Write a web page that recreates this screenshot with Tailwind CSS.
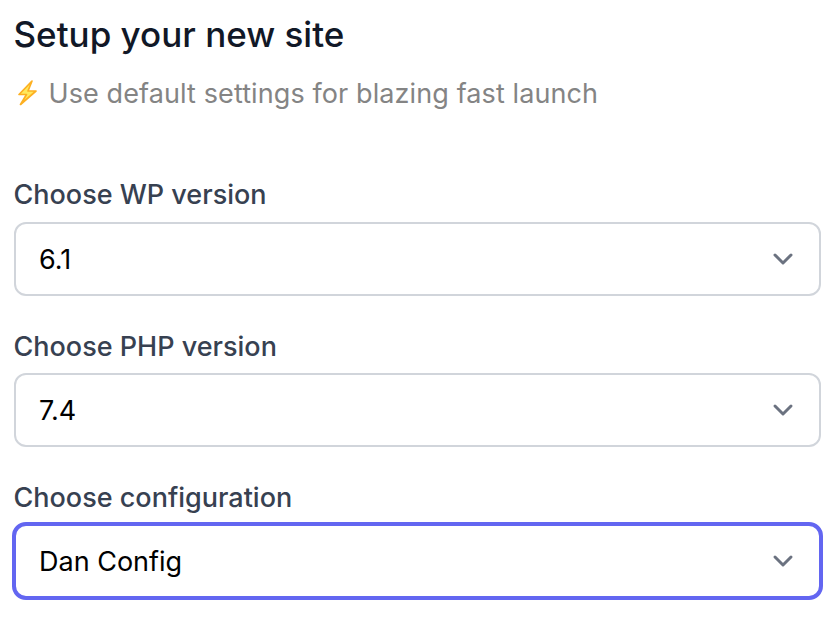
<!DOCTYPE html>
<html lang="en">

<head>
  <meta charset="UTF-8">
  <meta name="viewport" content="width=device-width, initial-scale=1.0">
  <title>Setup your new site</title>
  <script src="https://cdn.jsdelivr.net/npm/@tailwindcss/browser@4"></script>
</head>

<body class="bg-white font-['Inter',sans-serif]">

  <main class="min-h-screen pl-[13.5px] pr-[19.5px] pt-3">
    <!-- Heading -->
    <h1 class="text-[35px] leading-[44px] font-medium text-[#111827]">Setup your new site</h1>
    <div class="mt-[17px] flex items-center h-10 text-[27px] text-[#848484]">
      <svg class="w-[26px] h-[30px] mr-[9px]" viewBox="0 0 26 30" fill="none">
        <path d="M18 3 5 16.500h7.500L6.500 26.500 22 13h-8z" fill="#ffe95c" stroke="#fdb022" stroke-width="1.700" stroke-linejoin="round" />
      </svg>
      <p class="pt-0.5 tracking-[0.1px]">Use default settings for blazing fast launch</p>
    </div>

    <!-- Site options -->
    <form class="mt-[62px]">
      <label class="block h-[47px] leading-10 text-[27px] font-medium text-[#374151]">Choose WP version</label>
      <div class="flex items-center justify-between h-[74px] pl-[23.5px] pr-6 border-2 border-[#d1d5db] rounded-xl text-[27px] text-black">
        <span class="pt-0.5">6.1</span>
        <svg class="w-6 h-6" viewBox="0 0 24 24" fill="none" stroke="#6b7280" stroke-width="3" stroke-linecap="round" stroke-linejoin="round">
          <path d="m4 8 8 8 8-8" />
        </svg>
      </div>

      <label class="block mt-[30px] h-[47px] pt-px leading-10 text-[27px] font-medium text-[#374151]">Choose PHP version</label>
      <div class="flex items-center justify-between h-[74px] pl-[23.5px] pr-6 border-2 border-[#d1d5db] rounded-xl text-[27px] text-black">
        <span class="pt-0.5">7.4</span>
        <svg class="w-6 h-6" viewBox="0 0 24 24" fill="none" stroke="#6b7280" stroke-width="3" stroke-linecap="round" stroke-linejoin="round">
          <path d="m4 8 8 8 8-8" />
        </svg>
      </div>

      <label class="block mt-[30px] h-[45px] pt-px leading-10 text-[27px] font-medium text-[#374151]">Choose configuration</label>
      <!-- Focused select -->
      <div class="-mx-0.5 flex items-center justify-between h-[78px] pl-[23.5px] pr-6 border-4 border-[#6366f1] rounded-[14px] text-[27px] text-black">
        <span class="pt-0.5">Dan Config</span>
        <svg class="w-6 h-6" viewBox="0 0 24 24" fill="none" stroke="#6b7280" stroke-width="3" stroke-linecap="round" stroke-linejoin="round">
          <path d="m4 8 8 8 8-8" />
        </svg>
      </div>
    </form>
  </main>

</body>

</html>
